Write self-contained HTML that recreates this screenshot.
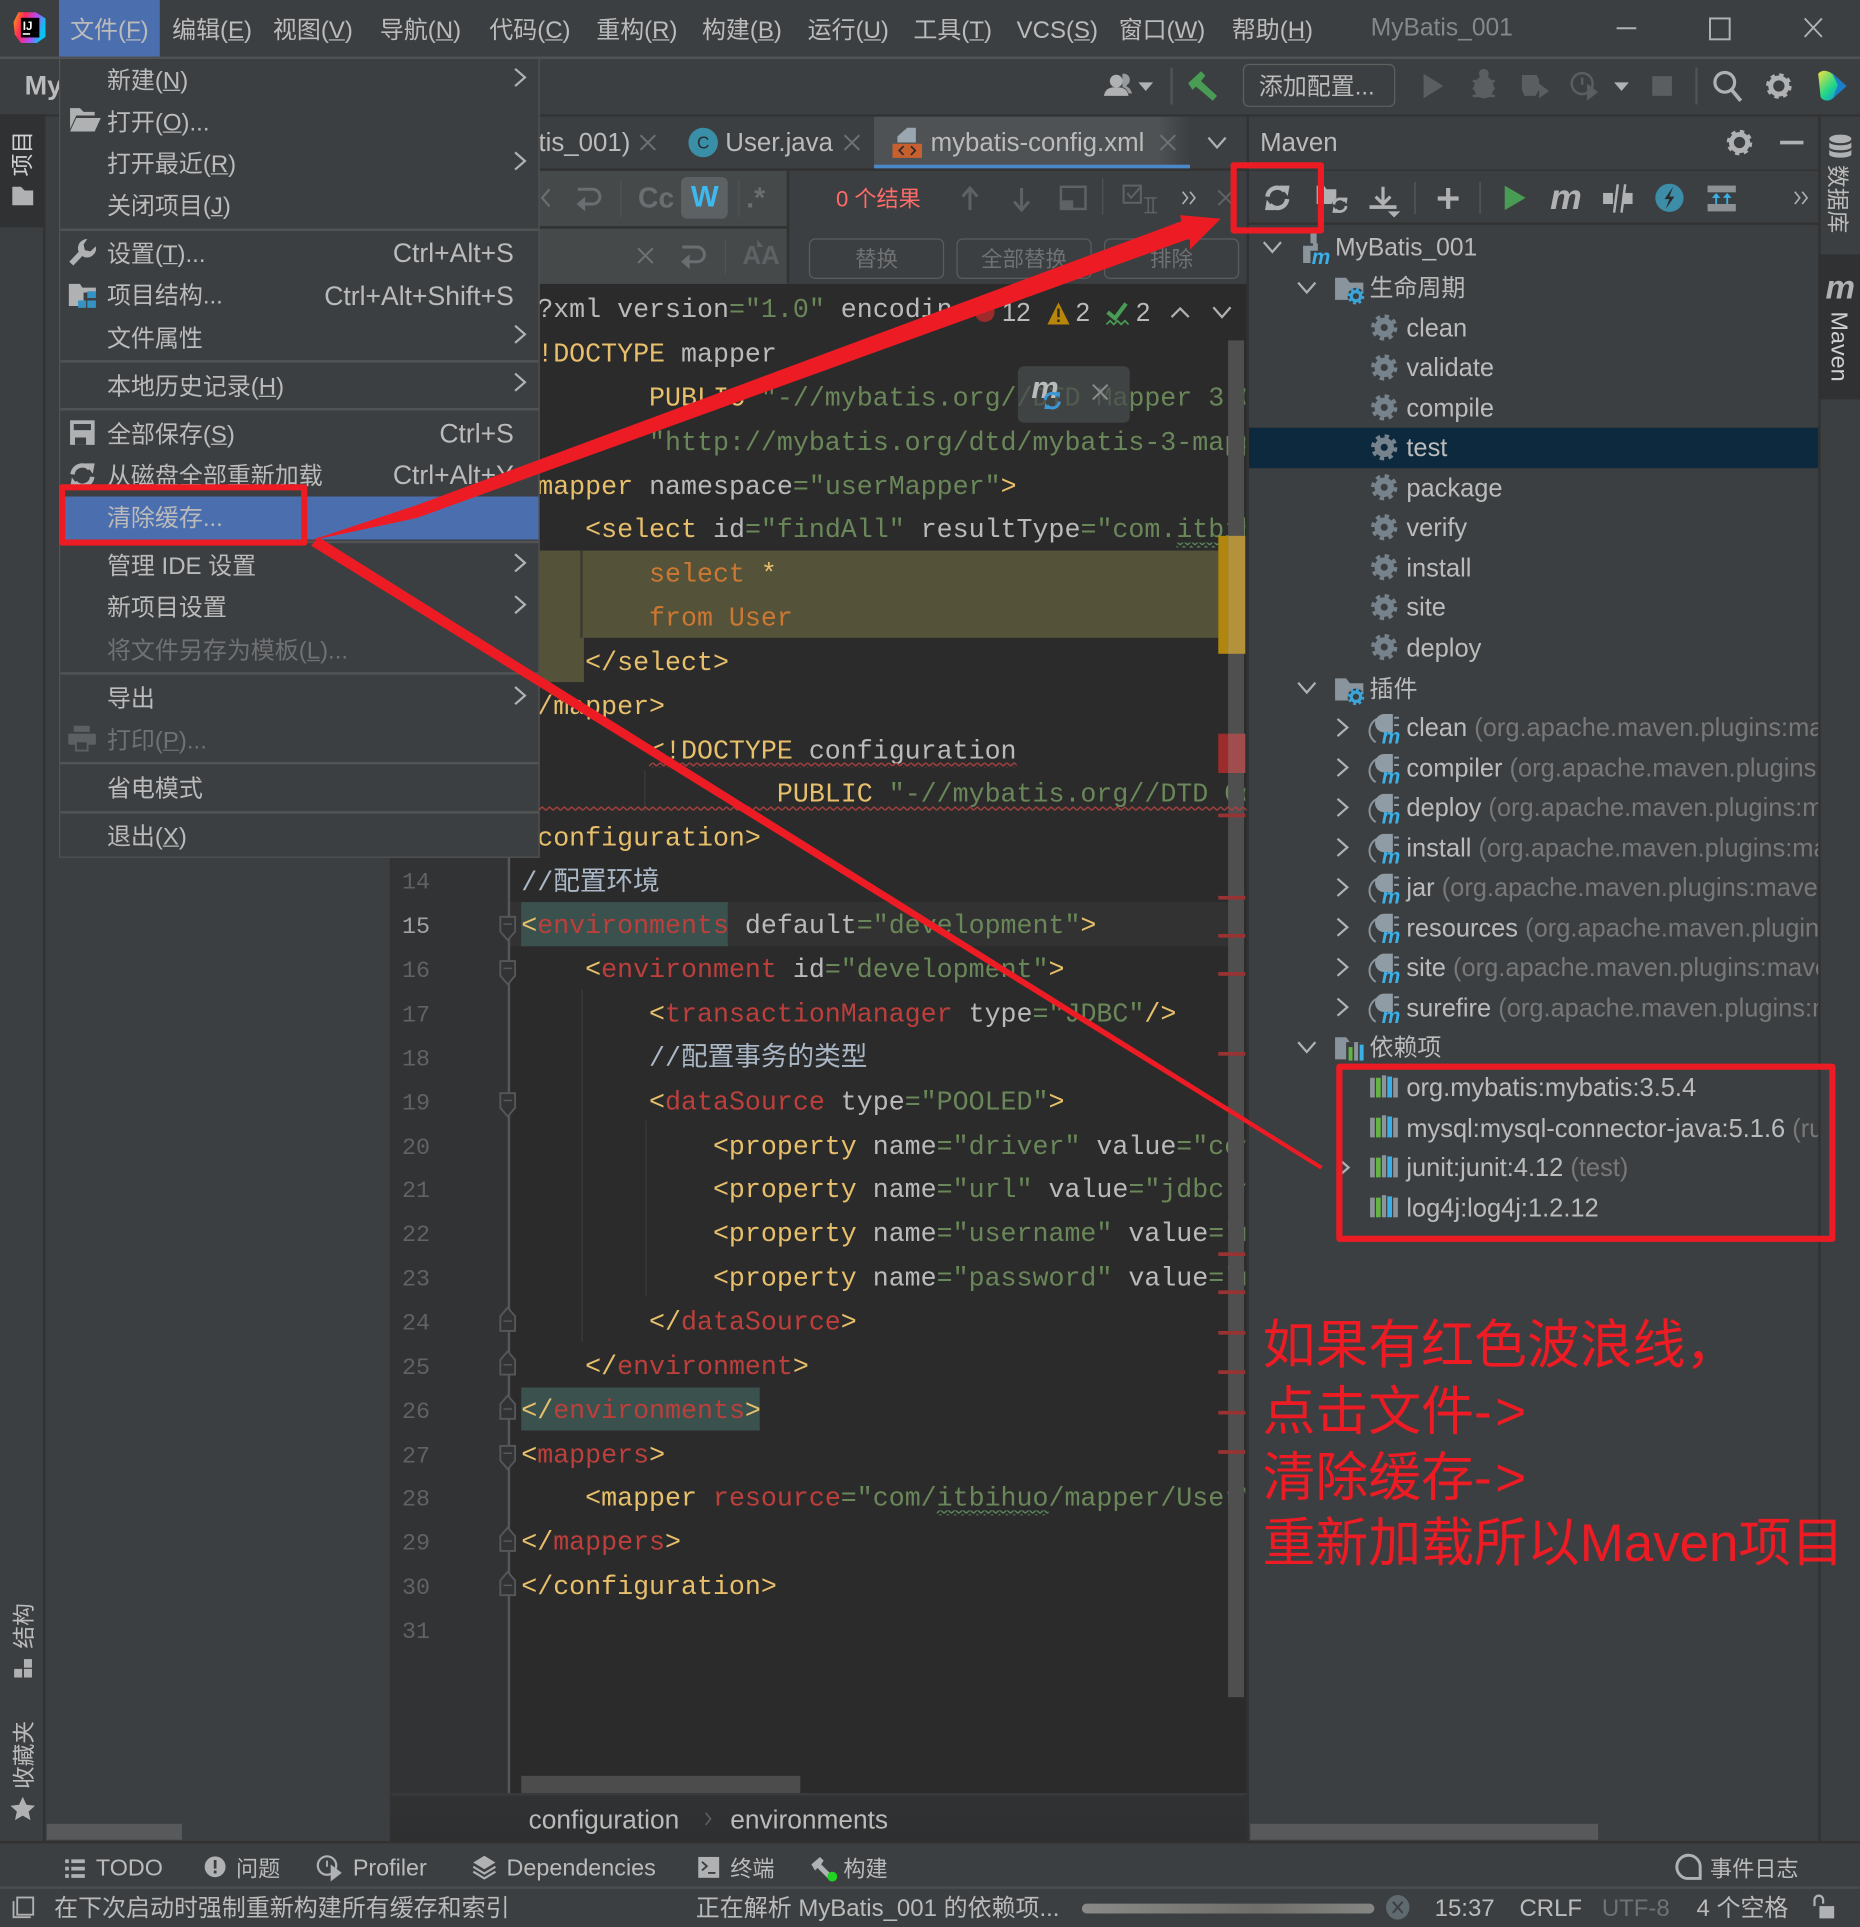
<!DOCTYPE html>
<html lang="zh"><head><meta charset="utf-8"><title>IntelliJ IDEA</title>
<style>
html,body{margin:0;padding:0;width:1860px;height:1927px;overflow:hidden;background:#3c3f41}
#r{position:absolute;left:0;top:0;width:1513px;height:1568px;transform:scale(1.22934,1.22895);transform-origin:0 0;background:#3c3f41;font-family:"Liberation Sans","Noto Sans CJK SC",sans-serif;overflow:hidden}
.b{position:absolute}
.t{position:absolute;white-space:nowrap;line-height:30px;height:30px;margin-top:-14px;font-size:20.7px;color:#bbb}
.z{font-size:19.5px}
.d{color:#6f7173}
.gr{color:#787878}
.s{position:absolute;right:1095px;white-space:nowrap;line-height:30px;height:30px;margin-top:-14px;font-size:21.6px;color:#bbb}
.v{position:absolute;white-space:nowrap;font-size:18.5px;color:#bbb;line-height:20px;transform:translate(-50%,-50%) rotate(-90deg)}
.vr{transform:translate(-50%,-50%) rotate(90deg)}
.c{position:absolute;left:424px;white-space:pre;font:21.67px/36px "Liberation Mono","Noto Sans CJK SC",monospace;height:36px;margin-top:-16px;color:#bababa}
.y{color:#e8bf6a}.e{color:#bc3f3c}.g{color:#6a8759}.o{color:#cc7832}.cm{color:#a9b7c6}
.n{position:absolute;left:327px;font:19px/24px "Liberation Mono",monospace;color:#606366;margin-top:-10px}
.sep{position:absolute;left:49px;width:389px;height:2px;background:#515355}
.red{position:absolute;left:1027px;white-space:nowrap;font-size:43px;line-height:54px;height:54px;margin-top:-26px;color:#ed1c24}
.red i{font-style:normal;letter-spacing:3px}
.fb{position:absolute;border:1.6px solid #5a5d5f;border-radius:5px;box-sizing:border-box;color:#6f7173;font-size:17.5px;text-align:center;line-height:32px;height:33px;top:194px}
.st{position:absolute;left:991px;width:22px;height:3.4px;background:#993333}
</style></head><body>
<div id="r">

<!-- structure -->
<div class="b" style="left:0;top:46px;width:1513px;height:1.5px;background:#505254"></div>
<div class="b" style="left:0;top:93px;width:1513px;height:2px;background:#313335"></div>
<div class="b" style="left:0;top:93px;width:35px;height:92px;background:#2f3133"></div>
<div class="b" style="left:35px;top:93px;width:1.5px;height:1405px;background:#323232"></div>
<div class="b" style="left:317px;top:95px;width:1.5px;height:1403px;background:#323232"></div>
<div class="b" style="left:318px;top:230px;width:96px;height:1231px;background:#313335"></div>
<div class="b" style="left:414px;top:230px;width:600px;height:1231px;background:#2b2b2b"></div>
<div class="b" style="left:318px;top:1459px;width:696px;height:39px;background:linear-gradient(#313233,#2e2f30)"></div>
<div class="b" style="left:318px;top:1459px;width:696px;height:2px;background:#383a3c"></div>
<div class="b" style="left:1014px;top:95px;width:1.5px;height:1403px;background:#323232"></div>
<div class="b" style="left:1479px;top:95px;width:1.5px;height:1403px;background:#323232"></div>
<div class="b" style="left:0;top:1498px;width:1513px;height:2px;background:#323232"></div>
<div class="b" style="left:0;top:1535px;width:1513px;height:2px;background:#4a4c4e"></div>

<!-- current line + highlights -->
<div class="b" style="left:414px;top:734px;width:586px;height:36px;background:#323232"></div>
<div class="b" style="left:424px;top:734px;width:168px;height:36px;background:#3b514d"></div>
<div class="b" style="left:424px;top:1129px;width:194px;height:35px;background:#3b514d"></div>
<div class="b" style="left:438px;top:448px;width:37px;height:107px;background:#545239"></div>
<div class="b" style="left:473px;top:448px;width:518px;height:71px;background:#545239"></div>
<div class="b" style="left:472px;top:448px;width:2px;height:71px;background:#3a3a30"></div>

<!-- indent guides / fold line -->
<div class="b" style="left:413px;top:697px;width:1.5px;height:762px;background:#555759"></div>
<div class="b" style="left:472.5px;top:805px;width:1px;height:287px;background:#3b3b3b"></div>
<div class="b" style="left:524.5px;top:912px;width:1px;height:143px;background:#3b3b3b"></div>
<div class="b" style="left:524px;top:627px;width:1px;height:34px;background:#3b3b3b"></div>

<!-- code -->
<div class="b" style="left:0;top:0;width:1013px;height:1460px;overflow:hidden">
<div class="c" style="top:251px"><span class="y">&lt;</span><span>?xml version</span><span class="g">="1.0"</span> encoding<span class="g">="UTF-8"</span></div>
<div class="c" style="top:287px"><span class="y">&lt;!DOCTYPE</span> mapper</div>
<div class="c" style="top:323px">        <span class="y">PUBLIC</span> <span class="g">"-//mybatis.org//DTD Mapper 3.0//EN"</span></div>
<div class="c" style="top:359px">        <span class="g">"http://mybatis.org/dtd/mybatis-3-mapper.dtd"</span><span class="y">&gt;</span></div>
<div class="c" style="top:394.5px"><span class="y">&lt;mapper</span> namespace<span class="g">="userMapper"</span><span class="y">&gt;</span></div>
<div class="c" style="top:430px">    <span class="y">&lt;select</span> id<span class="g">="findAll"</span> resultType<span class="g">="com.itbihuo.domain.User"</span><span class="y">&gt;</span></div>
<div class="c" style="top:466px">        <span class="o">select</span> <span class="y">*</span></div>
<div class="c" style="top:502px">        <span class="o">from User</span></div>
<div class="c" style="top:538px">    <span class="y">&lt;/select&gt;</span></div>
<div class="c" style="top:574px"><span class="y">&lt;/mapper&gt;</span></div>
<div class="c" style="top:609.5px">        <span class="y">&lt;!DOCTYPE</span> configuration</div>
<div class="c" style="top:645px">                <span class="y">PUBLIC</span> <span class="g">"-//mybatis.org//DTD Config 3.0//EN"</span></div>
<div class="c" style="top:681px"><span class="y">&lt;configuration&gt;</span></div>
<div class="c cm" style="top:716.5px">//配置环境</div>
<div class="c" style="top:752px"><span class="y">&lt;</span><span class="e">environments</span> default<span class="g">="development"</span><span class="y">&gt;</span></div>
<div class="c" style="top:788px">    <span class="y">&lt;</span><span class="e">environment</span> id<span class="g">="development"</span><span class="y">&gt;</span></div>
<div class="c" style="top:824px">        <span class="y">&lt;</span><span class="e">transactionManager</span> type<span class="g">="JDBC"</span><span class="y">/&gt;</span></div>
<div class="c cm" style="top:860px">        //配置事务的类型</div>
<div class="c" style="top:895.5px">        <span class="y">&lt;</span><span class="e">dataSource</span> type<span class="g">="POOLED"</span><span class="y">&gt;</span></div>
<div class="c" style="top:931.5px">            <span class="y">&lt;property</span> name<span class="g">="driver"</span> value<span class="g">="com.mysql.jdbc.Driver"</span></div>
<div class="c" style="top:967px">            <span class="y">&lt;property</span> name<span class="g">="url"</span> value<span class="g">="jdbc:mysql:///test"</span></div>
<div class="c" style="top:1003px">            <span class="y">&lt;property</span> name<span class="g">="username"</span> value<span class="g">="root"</span></div>
<div class="c" style="top:1039px">            <span class="y">&lt;property</span> name<span class="g">="password"</span> value<span class="g">="root"</span></div>
<div class="c" style="top:1075px">        <span class="y">&lt;/</span><span class="e">dataSource</span><span class="y">&gt;</span></div>
<div class="c" style="top:1110.5px">    <span class="y">&lt;/</span><span class="e">environment</span><span class="y">&gt;</span></div>
<div class="c" style="top:1146.5px"><span class="y">&lt;/</span><span class="e">environments</span><span class="y">&gt;</span></div>
<div class="c" style="top:1182.5px"><span class="y">&lt;</span><span class="e">mappers</span><span class="y">&gt;</span></div>
<div class="c" style="top:1218px">    <span class="y">&lt;mapper</span> <span class="e">resource</span><span class="g">="com/itbihuo/mapper/UserMapper.xml"</span></div>
<div class="c" style="top:1254px"><span class="y">&lt;/</span><span class="e">mappers</span><span class="y">&gt;</span></div>
<div class="c" style="top:1290px"><span class="y">&lt;/configuration&gt;</span></div>
</div>

<!-- line numbers -->
<div class="n" style="top:716px">14</div><div class="n" style="top:752px;color:#a4a3a3">15</div><div class="n" style="top:788px">16</div><div class="n" style="top:824px">17</div><div class="n" style="top:860px">18</div><div class="n" style="top:895.5px">19</div><div class="n" style="top:931.5px">20</div><div class="n" style="top:967px">21</div><div class="n" style="top:1003px">22</div><div class="n" style="top:1039px">23</div><div class="n" style="top:1075px">24</div><div class="n" style="top:1110.5px">25</div><div class="n" style="top:1146.5px">26</div><div class="n" style="top:1182.5px">27</div><div class="n" style="top:1218px">28</div><div class="n" style="top:1254px">29</div><div class="n" style="top:1290px">30</div><div class="n" style="top:1326px">31</div>

<!-- editor error stripe + scrollbars -->
<div class="b" style="left:991px;top:436px;width:9px;height:96px;background:#b0860f"></div>
<div class="b" style="left:999px;top:277px;width:13px;height:1104px;background:#4f4f4f"></div>
<div class="b" style="left:999px;top:436px;width:14px;height:96px;background:#b3923b"></div>
<div class="b" style="left:991px;top:597px;width:8px;height:32px;background:#9b2c2c"></div>
<div class="b" style="left:999px;top:597px;width:14px;height:32px;background:#a14d4d"></div>
<div class="st" style="top:662px"></div><div class="st" style="top:729px"></div><div class="st" style="top:760px"></div><div class="st" style="top:791px"></div><div class="st" style="top:856px"></div><div class="st" style="top:1019px"></div><div class="st" style="top:1050px"></div><div class="st" style="top:1083px"></div><div class="st" style="top:1115px"></div><div class="st" style="top:1148px"></div><div class="st" style="top:1180px"></div>
<div class="b" style="left:424px;top:1445px;width:227px;height:14px;background:#4c4c4c"></div>
<div class="b" style="left:37.5px;top:1484px;width:110px;height:13px;background:#57595b"></div>
<div class="b" style="left:1017px;top:1484px;width:283px;height:13px;background:#57595b"></div>

<!-- inspection widget -->
<div class="b" style="left:776px;top:238px;width:224px;height:32px;background:#2b2b2b"></div>
<div class="t" style="left:815px;top:254px;font-size:21px">12</div>
<div class="t" style="left:875px;top:254px;font-size:21px">2</div>
<div class="t" style="left:924px;top:254px;font-size:21px">2</div>
<div class="b" style="left:828px;top:298px;width:91px;height:46px;background:rgba(72,76,78,.72);border-radius:5px"></div>

<!-- tab bar -->
<div class="b" style="left:711px;top:95px;width:257px;height:39px;background:linear-gradient(90deg,#4e5254 90%,#3c3f41)"></div>
<div class="b" style="left:711px;top:133.5px;width:257px;height:4.5px;background:#4a88c7"></div>
<div class="t" style="left:438px;top:116px;font-size:21px">tis_001)</div>
<div class="t" style="left:590px;top:116px;font-size:21px">User.java</div>
<div class="t" style="left:757px;top:116px;font-size:21px">mybatis-config.xml</div>

<!-- find bar -->
<div class="b" style="left:318px;top:138px;width:696px;height:92.5px;background:#3c3f41"></div>
<div class="b" style="left:318px;top:138px;width:322px;height:46px;background:#45494a"></div>
<div class="b" style="left:318px;top:186px;width:322px;height:44.5px;background:#45494a"></div>
<div class="b" style="left:640px;top:138px;width:1.5px;height:92px;background:#323232"></div>
<div class="b" style="left:318px;top:137px;width:696px;height:1.5px;background:#323232"></div>
<div class="b" style="left:318px;top:184px;width:322px;height:2px;background:#323232"></div>
<div class="b" style="left:554px;top:144px;width:38px;height:34px;border-radius:5px;background:#5c6164"></div>
<div class="t" style="left:519px;top:160px;font-size:23px;font-weight:bold;color:#6b6e70">Cc</div>
<div class="t" style="left:562px;top:160px;font-size:24px;font-weight:bold;color:#3db8f0">W</div>
<div class="t" style="left:607px;top:160px;font-size:23px;font-weight:bold;color:#6b6e70">.*</div>
<div class="t z" style="left:680px;top:161px;font-size:18px;color:#ff6b68">0 个结果</div>
<div class="t" style="left:604px;top:208px;font-size:21px;font-weight:bold;color:#5f6265">AA</div>
<div class="fb" style="left:658px;width:110px">替换</div>
<div class="fb" style="left:778px;width:110px">全部替换</div>
<div class="fb" style="left:898px;width:110px">排除</div>

<!-- main toolbar -->
<div class="t" style="left:20px;top:69px;font-size:22px;font-weight:bold">My</div>
<div class="b" style="left:1011px;top:52px;width:124px;height:35px;border:1.6px solid #5e6060;border-radius:5px;box-sizing:border-box"></div>
<div class="t z" style="left:1024px;top:70px">添加配置...</div>
<div class="b" style="left:952px;top:55px;width:1.5px;height:30px;background:#505254"></div>
<div class="b" style="left:1379px;top:55px;width:1.5px;height:30px;background:#505254"></div>

<!-- menu bar -->
<div class="b" style="left:48px;top:0;width:82px;height:46px;background:#4b6eaf"></div>
<div class="t z" style="left:57px;top:24px"><span>文件(<u>F</u>)</span></div>
<div class="t z" style="left:140px;top:24px">编辑(<u>E</u>)</div>
<div class="t z" style="left:222px;top:24px">视图(<u>V</u>)</div>
<div class="t z" style="left:309px;top:24px">导航(<u>N</u>)</div>
<div class="t z" style="left:398px;top:24px">代码(<u>C</u>)</div>
<div class="t z" style="left:485px;top:24px">重构(<u>R</u>)</div>
<div class="t z" style="left:571px;top:24px">构建(<u>B</u>)</div>
<div class="t z" style="left:657px;top:24px">运行(<u>U</u>)</div>
<div class="t z" style="left:743px;top:24px">工具(<u>T</u>)</div>
<div class="t z" style="left:827px;top:24px">VCS(<u>S</u>)</div>
<div class="t z" style="left:910px;top:24px">窗口(<u>W</u>)</div>
<div class="t z" style="left:1002px;top:24px">帮助(<u>H</u>)</div>
<div class="t" style="left:1115px;top:22px;font-size:20px;color:#85888a">MyBatis_001</div>

<!-- Maven panel -->
<div class="b" style="left:1016px;top:137.5px;width:463px;height:1.5px;background:#323232"></div>
<div class="b" style="left:1016px;top:181px;width:463px;height:1.5px;background:#323232"></div>
<div class="b" style="left:1016px;top:348px;width:463px;height:33px;background:#0d293e"></div>
<div class="t" style="left:1025px;top:116px;font-size:21px">Maven</div>
<div class="b" style="left:0;top:0;width:1479px;height:1498px;overflow:hidden">
<div class="t" style="left:1086px;top:201px;font-size:20px">MyBatis_001</div>
<div class="t z" style="left:1114px;top:234px">生命周期</div>
<div class="t" style="left:1144px;top:266.5px">clean</div>
<div class="t" style="left:1144px;top:299px">validate</div>
<div class="t" style="left:1144px;top:331.5px">compile</div>
<div class="t" style="left:1144px;top:364px">test</div>
<div class="t" style="left:1144px;top:396.5px">package</div>
<div class="t" style="left:1144px;top:429px">verify</div>
<div class="t" style="left:1144px;top:461.5px">install</div>
<div class="t" style="left:1144px;top:494px">site</div>
<div class="t" style="left:1144px;top:526.5px">deploy</div>
<div class="t z" style="left:1114px;top:559.5px">插件</div>
<div class="t" style="left:1144px;top:592px">clean <span class="gr">(org.apache.maven.plugins:maven-clean-plugin)</span></div>
<div class="t" style="left:1144px;top:624.5px">compiler <span class="gr">(org.apache.maven.plugins:maven-compiler)</span></div>
<div class="t" style="left:1144px;top:657px">deploy <span class="gr">(org.apache.maven.plugins:maven-deploy)</span></div>
<div class="t" style="left:1144px;top:689.5px">install <span class="gr">(org.apache.maven.plugins:maven-install)</span></div>
<div class="t" style="left:1144px;top:722px">jar <span class="gr">(org.apache.maven.plugins:maven-jar-plugin)</span></div>
<div class="t" style="left:1144px;top:754.5px">resources <span class="gr">(org.apache.maven.plugins:maven)</span></div>
<div class="t" style="left:1144px;top:787px">site <span class="gr">(org.apache.maven.plugins:maven-site)</span></div>
<div class="t" style="left:1144px;top:819.5px">surefire <span class="gr">(org.apache.maven.plugins:maven)</span></div>
<div class="t z" style="left:1114px;top:852px">依赖项</div>
<div class="t" style="left:1144px;top:885px">org.mybatis:mybatis:3.5.4</div>
<div class="t" style="left:1144px;top:917.5px">mysql:mysql-connector-java:5.1.6 <span class="gr">(runtime)</span></div>
<div class="t" style="left:1144px;top:950px">junit:junit:4.12 <span class="gr">(test)</span></div>
<div class="t" style="left:1144px;top:982.5px">log4j:log4j:1.2.12</div>
</div>

<!-- right stripe -->
<div class="b" style="left:1480px;top:207px;width:33px;height:118px;background:#2f3133"></div>
<div class="v vr" style="left:1494px;top:162px">数据库</div>
<div class="v vr" style="left:1495px;top:282px;font-size:19px;color:#d0d0d0">Maven</div>

<!-- left stripe -->
<div class="v" style="left:19px;top:125px;color:#d0d0d0">项目</div>
<div class="v" style="left:19.5px;top:1323px">结构</div>
<div class="v" style="left:19.5px;top:1428px">收藏夹</div>

<!-- breadcrumbs -->
<div class="t" style="left:430px;top:1480px;font-size:21.4px">configuration</div>
<div class="t" style="left:594px;top:1480px;font-size:21.4px">environments</div>

<!-- bottom tool bar -->
<div class="t" style="left:78px;top:1520px;font-size:19px">TODO</div>
<div class="t" style="left:192px;top:1520px;font-size:18px">问题</div>
<div class="t" style="left:287px;top:1520px;font-size:19px">Profiler</div>
<div class="t" style="left:412px;top:1520px;font-size:19px">Dependencies</div>
<div class="t" style="left:594px;top:1520px;font-size:18px">终端</div>
<div class="t" style="left:686px;top:1520px;font-size:18px">构建</div>
<div class="t" style="left:1391px;top:1520px;font-size:18px">事件日志</div>

<!-- status bar -->
<div class="t" style="left:44px;top:1552px;font-size:19.5px">在下次启动时强制重新构建所有缓存和索引</div>
<div class="t" style="left:566px;top:1552px;font-size:19.5px">正在解析 MyBatis_001 的依赖项...</div>
<div class="b" style="left:880px;top:1549px;width:238px;height:7.5px;border-radius:4px;background:linear-gradient(90deg,#8a8a88,#6f6e6a 60%,#858583)"></div>
<div class="t" style="left:1167px;top:1552px;font-size:19.5px">15:37</div>
<div class="t" style="left:1236px;top:1552px;font-size:19.5px">CRLF</div>
<div class="t" style="left:1303px;top:1552px;font-size:19.5px;color:#6f7173">UTF-8</div>
<div class="t" style="left:1380px;top:1552px;font-size:19.5px">4 个空格</div>

<!-- file menu -->
<div class="b" style="left:48px;top:46.5px;width:390.5px;height:651px;background:#3c3f41;border:1.5px solid #515355;box-sizing:border-box"></div>
<div class="b" style="left:49.5px;top:404px;width:388px;height:34.5px;background:#4b6eaf"></div>
<div class="sep" style="top:186px"></div>
<div class="sep" style="top:293px"></div>
<div class="sep" style="top:332px"></div>
<div class="sep" style="top:440px"></div>
<div class="sep" style="top:547px"></div>
<div class="sep" style="top:620px"></div>
<div class="sep" style="top:659.5px"></div>
<div class="t z" style="left:87px;top:65px">新建(<u>N</u>)</div>
<div class="t z" style="left:87px;top:99px">打开(<u>O</u>)...</div>
<div class="t z" style="left:87px;top:133px">打开最近(<u>R</u>)</div>
<div class="t z" style="left:87px;top:167px">关闭项目(<u>J</u>)</div>
<div class="t z" style="left:87px;top:206px">设置(<u>T</u>)...</div>
<div class="t z" style="left:87px;top:240px">项目结构...</div>
<div class="t z" style="left:87px;top:275px">文件属性</div>
<div class="t z" style="left:87px;top:314px">本地历史记录(<u>H</u>)</div>
<div class="t z" style="left:87px;top:353px">全部保存(<u>S</u>)</div>
<div class="t z" style="left:87px;top:387px">从磁盘全部重新加载</div>
<div class="t z" style="left:87px;top:421px">清除缓存...</div>
<div class="t z" style="left:87px;top:460px">管理 IDE 设置</div>
<div class="t z" style="left:87px;top:494px">新项目设置</div>
<div class="t z d" style="left:87px;top:529px">将文件另存为模板(<u>L</u>)...</div>
<div class="t z" style="left:87px;top:568px">导出</div>
<div class="t z d" style="left:87px;top:602px">打印(<u>P</u>)...</div>
<div class="t z" style="left:87px;top:641px">省电模式</div>
<div class="t z" style="left:87px;top:680px">退出(<u>X</u>)</div>
<div class="s" style="top:205px">Ctrl+Alt+S</div>
<div class="s" style="top:240px">Ctrl+Alt+Shift+S</div>
<div class="s" style="top:352px">Ctrl+S</div>
<div class="s" style="top:386px">Ctrl+Alt+Y</div>

<!-- icons -->
<svg class="b" style="left:0;top:0" width="1513" height="1568" viewBox="0 0 1513 1568" xmlns="http://www.w3.org/2000/svg">
<defs>
<linearGradient id="ij" x1="0" y1="0" x2="1" y2=".3"><stop offset="0" stop-color="#f9a012"/><stop offset=".35" stop-color="#fe2857"/><stop offset=".7" stop-color="#b74af7"/><stop offset="1" stop-color="#07c3f2"/></linearGradient>
<linearGradient id="cw" x1="0" y1="0" x2="1" y2="1"><stop offset="0" stop-color="#f5e23c"/><stop offset=".5" stop-color="#21d789"/><stop offset="1" stop-color="#087cfa"/></linearGradient>
<pattern id="wr" width="6" height="4" patternUnits="userSpaceOnUse"><path d="M0 3.4L3 .6L6 3.4" fill="none" stroke="#a8413f" stroke-width="1.1"/></pattern>
<pattern id="wg" width="6" height="4" patternUnits="userSpaceOnUse"><path d="M0 3.4L3 .6L6 3.4" fill="none" stroke="#5d8a60" stroke-width="1.1"/></pattern>
<g id="gear"><circle r="5.4" fill="none" stroke="#76838d" stroke-width="5"/><circle r="9.2" fill="none" stroke="#76838d" stroke-width="3" stroke-dasharray="3.6 3.63"/></g>
<g id="gearw"><circle r="6.6" fill="none" stroke="#afb1b3" stroke-width="4"/><circle r="9" fill="none" stroke="#afb1b3" stroke-width="2.8" stroke-dasharray="3.5 3.57"/></g>
<g id="gearb"><circle r="6.8" fill="#3c3f41"/><circle r="3.8" fill="none" stroke="#3ba5d8" stroke-width="2.6"/><circle r="5.8" fill="none" stroke="#3ba5d8" stroke-width="2" stroke-dasharray="2.27 2.28"/></g>
<g id="plug"><path d="M-7 -7A11 11 0 0 0 -8 12" fill="none" stroke="#8a949c" stroke-width="1.6"/><path d="M-1 -11h7v15h-7a7.500 7.500 0 0 1 0 -15z" fill="#8f9ba5"/><path d="M7 -8h4M7 -2h4" stroke="#8f9ba5" stroke-width="1.6"/><text x="-3" y="13" font-family="Liberation Sans" font-size="17" font-weight="bold" font-style="italic" fill="#3bb0e6">m</text></g>
<g id="bars"><rect x="0" y="2" width="3.8" height="16" fill="#8a949c"/><rect x="4.8" y="2" width="3.8" height="16" fill="#62b543"/><rect x="9.6" y="0" width="3.4" height="18" fill="#8a949c"/><rect x="14" y="1" width="3.8" height="17" fill="#3bb0e6"/><rect x="18.8" y="2" width="3.8" height="16" fill="#8a949c"/></g>
<path id="chr" d="M-4 -7L4 0L-4 7" fill="none" stroke="#afb1b3" stroke-width="1.8"/>
<path id="chd" d="M-7 -4L0 4L7 -4" fill="none" stroke="#afb1b3" stroke-width="1.8"/>
<path id="x" d="M-6 -6L6 6M6 -6L-6 6" fill="none" stroke-width="1.6"/>
<g id="rf" fill="none" stroke="#afb1b3" stroke-width="3.6"><path d="M-8 -1A8 8 0 0 1 6 -5.5"/><path d="M8 1A8 8 0 0 1 -6 5.5"/><path d="M2 -10L10 -10L8.500 -1.500z" fill="#afb1b3" stroke="none"/><path d="M-2 10L-10 10L-8.500 1.500z" fill="#afb1b3" stroke="none"/></g>
</defs>

<!-- IJ logo -->
<path d="M15 10L29 10L37 15L37 30L30 35L17 35L12 28L11 18z" fill="url(#ij)"/>
<rect x="17" y="14.5" width="15" height="16" fill="#000"/>
<text x="18.5" y="24.5" font-family="Liberation Sans" font-size="9.5" font-weight="bold" fill="#fff">IJ</text>
<rect x="18.5" y="27" width="6" height="1.3" fill="#fff"/>

<!-- window controls -->
<path d="M1315 23h16" stroke="#afb1b3" stroke-width="1.6"/>
<rect x="1391" y="15" width="16" height="17" fill="none" stroke="#afb1b3" stroke-width="1.6"/>
<path d="M1468 15L1482 30M1482 15L1468 30" stroke="#afb1b3" stroke-width="1.5"/>

<!-- main toolbar icons -->
<g fill="#afb1b3"><circle cx="908" cy="66" r="5.2"/><path d="M898 78c1-6 5-7 10-7s9 1 10 7z"/><path d="M913 60a5 5 0 0 1 5 8l-2 2 3 2 2 4h-3c-1-3-3-5-5-5z" opacity=".8"/><path d="M926 67h12l-6 7z"/></g>
<path d="M966.5 67.6L977 58L980.5 61.5L977 66L990 78L986.5 82L973 70.5L970 73z" fill="#499c54"/>
<path d="M1158 60L1174 70L1158 80z" fill="#5b5e60"/>
<g fill="#5b5e60"><ellipse cx="1207" cy="71" rx="8" ry="9"/><path d="M1198 66h18M1198 72h18M1198 78h18" stroke="#5b5e60" stroke-width="2"/><circle cx="1207" cy="60" r="4"/></g>
<path d="M1238 61h12l2 4v8l-3 5h-9l-2-5zM1252 68l8 6-8 6z" fill="#5b5e60"/>
<g fill="none" stroke="#5b5e60" stroke-width="2"><circle cx="1287" cy="68" r="8.5"/><path d="M1287 63v6"/></g><path d="M1291 68l9 7-9 7z" fill="#5b5e60"/>
<path d="M1313 67h12l-6 7z" fill="#afb1b3"/>
<rect x="1344" y="62" width="16" height="16" fill="#5b5e60"/>
<circle cx="1403" cy="67" r="8" fill="none" stroke="#afb1b3" stroke-width="2.6"/><path d="M1408.5 73L1416 82" stroke="#afb1b3" stroke-width="3"/>
<use href="#gearw" x="1447" y="70"/>
<path d="M1479 60c4-4 7-2 10-1l13 11-11 10c-4 3-8 2-10-1z" fill="url(#cw)"/><path d="M1490 59l12 11-11 10 4-11z" fill="#1a7fc7"/>

<!-- tabs -->
<use href="#x" x="527" y="116" stroke="#6f7173"/>
<circle cx="572" cy="116" r="12" fill="#3a8fa8"/><text x="572" y="121" text-anchor="middle" font-family="Liberation Sans" font-size="14" fill="#2b2b2b">C</text>
<use href="#x" x="693" y="116" stroke="#6f7173"/>
<path d="M738 104h7v12h-15v-5z" fill="#9aa7b0"/>
<rect x="726" y="117" width="24" height="11.500" fill="#c75f2e"/>
<path d="M735 119l-3.500 3.500 3.500 3.500M741 119l3.500 3.500-3.500 3.500" fill="none" stroke="#2b2b2b" stroke-width="1.4"/>
<use href="#x" x="950" y="116" stroke="#6f7173"/>
<use href="#chd" x="990" y="116"/>

<!-- find bar icons -->
<path d="M447 154l-6 7 6 7" fill="none" stroke="#6b6e70" stroke-width="1.8"/>
<path d="M470 154h12a6 6 0 0 1 0 12h-9" fill="none" stroke="#6b6e70" stroke-width="2.4"/><path d="M476 160l-7 6 7 6z" fill="#6b6e70"/>
<path d="M505 147v30M601 147v30" stroke="#515355" stroke-width="1"/>
<path d="M789 153v18M783 160l6-7 6 7" fill="none" stroke="#5f6265" stroke-width="2.4"/>
<path d="M831 153v18M825 164l6 7 6-7" fill="none" stroke="#5f6265" stroke-width="2.4"/>
<rect x="863" y="152" width="20" height="18" fill="none" stroke="#5f6265" stroke-width="2"/><rect x="863" y="163" width="10" height="7" fill="#5f6265"/>
<path d="M897 145v30" stroke="#515355"/>
<rect x="914" y="151" width="14" height="14" fill="none" stroke="#5f6265" stroke-width="1.6"/><path d="M917 157l3 4 8-9" fill="none" stroke="#5f6265" stroke-width="1.6"/><path d="M931 161h10M931 173h10M934 161v12M938 161v12" stroke="#5f6265" stroke-width="1.2"/>
<path d="M962 156l4 5-4 5M968 156l4 5-4 5" fill="none" stroke="#afb1b3" stroke-width="1.3"/>
<use href="#x" x="997" y="161" stroke="#5f6265"/>
<use href="#x" x="525" y="208" stroke="#6f7173"/>
<path d="M555 201h12a6 6 0 0 1 0 12h-9" fill="none" stroke="#6b6e70" stroke-width="2.4"/><path d="M561 207l-7 6 7 6z" fill="#6b6e70"/>
<path d="M590 195v28" stroke="#515355"/>
<path d="M616 195l5 6h-5z" fill="#5f6265"/>

<!-- inspection icons -->
<circle cx="801" cy="254" r="8" fill="#9d2b2b"/>
<path d="M861 246L870 264H852z" fill="#b8860b"/><path d="M861 251v7M861 260v2" stroke="#2b2b2b" stroke-width="2"/>
<path d="M901 254l6 5 9-12" fill="none" stroke="#499c54" stroke-width="3.4"/><path d="M900 264l3-3 3 3 3-3 3 3 3-3 3 3" fill="none" stroke="#499c54" stroke-width="1.4"/>
<path d="M953 258l7-7 7 7" fill="none" stroke="#afb1b3" stroke-width="1.8"/>
<use href="#chd" x="994" y="254"/>
<text x="839" y="324" font-family="Liberation Sans" font-size="25" font-weight="bold" font-style="italic" fill="#b9bbbd">m</text>
<g transform="translate(856,326) scale(.72)" fill="none" stroke="#3b97d3"><path d="M-8 -1A8 8 0 0 1 6 -5.5" stroke-width="3.4"/><path d="M8 1A8 8 0 0 1 -6 5.5" stroke-width="3.4"/><path d="M2.5 -9.5L9 -9.5L8 -2.5z" fill="#3b97d3" stroke="none"/><path d="M-2.5 9.5L-9 9.5L-8 2.5z" fill="#3b97d3" stroke="none"/></g>
<use href="#x" x="895" y="319" stroke="#8a8c8e"/>

<!-- wavy underlines -->
<rect x="528" y="620.5" width="299" height="4" fill="url(#wr)"/>
<rect x="438" y="656" width="576" height="4" fill="url(#wr)"/>
<rect x="957" y="441.5" width="34" height="4" fill="url(#wg)"/>
<rect x="762" y="1229" width="91" height="4" fill="url(#wg)"/>

<!-- fold markers -->
<g fill="#313335" stroke="#555759" stroke-width="1.5">
<path d="M407 746h12v12l-6 7l-6-7z"/><path d="M407 782h12v12l-6 7l-6-7z"/><path d="M407 889.5h12v12l-6 7l-6-7z"/>
<path d="M407 1176.5h12v12l-6 7l-6-7z"/>
<path d="M407 1083v-12l6-7l6 7v12z"/><path d="M407 1118.5v-12l6-7l6 7v12z"/><path d="M407 1154.5v-12l6-7l6 7v12z"/><path d="M407 1262v-12l6-7l6 7v12z"/><path d="M407 1298v-12l6-7l6 7v12z"/>
</g>
<path d="M409.5 752h7M409.5 788h7M409.5 895.5h7M409.5 1182.5h7M409.5 1075h7M409.5 1110.5h7M409.5 1146.5h7M409.5 1254h7M409.5 1290h7" stroke="#555759" stroke-width="1.2"/>

<!-- maven toolbar -->
<use href="#gearw" x="1415" y="116"/>
<path d="M1448 116h19" stroke="#afb1b3" stroke-width="3"/>
<use href="#rf" x="1039" y="161"/>
<path d="M1071 151h6l2 3h8v7l-4 5h-12z" fill="#afb1b3"/>
<g transform="translate(1090,167) scale(.62)"><use href="#rf"/></g>
<path d="M1125 152v13M1119 160l6 6 6-6" fill="none" stroke="#afb1b3" stroke-width="2.6"/><rect x="1114" y="167" width="22" height="3" fill="#afb1b3"/><path d="M1129 172h10l-5 5z" fill="#afb1b3"/>
<path d="M1151 148v26M1204 148v26" stroke="#515355" stroke-width="1.4"/>
<path d="M1178 153v17M1169.500 161.500h17" stroke="#afb1b3" stroke-width="3.4"/>
<path d="M1224 151L1241 161L1224 171z" fill="#499c54"/>
<text x="1261" y="170" font-family="Liberation Sans" font-size="29" font-weight="bold" font-style="italic" fill="#afb1b3">m</text>
<rect x="1304" y="157" width="8" height="9" fill="#afb1b3"/><rect x="1320" y="157" width="8" height="9" fill="#afb1b3"/><path d="M1316 150l-3 23M1322 150l-3 23" stroke="#afb1b3" stroke-width="2"/>
<circle cx="1358" cy="161" r="11.500" fill="#3d8ca8"/><path d="M1361 152l-7 10h4l-3 8 7-10h-4z" fill="#2b2b2b"/>
<rect x="1389" y="151" width="23" height="5.500" fill="#8e9193"/><rect x="1389" y="166" width="23" height="6" fill="#8e9193"/>
<path d="M1396 158v8M1405 158v8" stroke="#3bb0e6" stroke-width="1.500"/><path d="M1392.500 161l3.500-4 3.500 4zM1401.500 161l3.500-4 3.500 4z" fill="#3bb0e6"/>
<path d="M1460 156l4 5-4 5M1466 156l4 5-4 5" fill="none" stroke="#afb1b3" stroke-width="1.300"/>

<!-- tree -->
<use href="#chd" x="1035" y="201"/><use href="#chd" x="1063" y="234"/><use href="#chd" x="1063" y="559.500"/><use href="#chd" x="1063" y="852"/>
<path d="M1066 190l4-1h1v9h-5zM1060 200h8v-2h4v6h-6v10h-6z" fill="#8a949c"/>
<text x="1067" y="215" font-family="Liberation Sans" font-size="17" font-weight="bold" font-style="italic" fill="#3bb0e6">m</text>
<g fill="#8a949c"><path d="M1086 226h9l3 4h11v14h-23z"/><path d="M1086 552h9l3 4h11v14h-23z"/><path d="M1086 844h9l3 4h11v14h-23z"/></g>
<use href="#gearb" x="1103" y="241"/><use href="#gearb" x="1103" y="567"/>
<rect x="1095" y="848" width="16" height="16" fill="#3c3f41"/>
<g><rect x="1097" y="852" width="3.200" height="11" fill="#62b543"/><rect x="1101.500" y="848" width="3.200" height="15" fill="#8a949c"/><rect x="1106" y="850" width="3.200" height="13" fill="#3bb0e6"/></g>
<use href="#gear" x="1126" y="266.500"/><use href="#gear" x="1126" y="299"/><use href="#gear" x="1126" y="331.500"/><use href="#gear" x="1126" y="364"/><use href="#gear" x="1126" y="396.500"/><use href="#gear" x="1126" y="429"/><use href="#gear" x="1126" y="461.500"/><use href="#gear" x="1126" y="494"/><use href="#gear" x="1126" y="526.500"/>
<use href="#chr" x="1092" y="592"/><use href="#chr" x="1092" y="624.500"/><use href="#chr" x="1092" y="657"/><use href="#chr" x="1092" y="689.500"/><use href="#chr" x="1092" y="722"/><use href="#chr" x="1092" y="754.500"/><use href="#chr" x="1092" y="787"/><use href="#chr" x="1092" y="819.500"/><use href="#chr" x="1093" y="950"/>
<use href="#plug" x="1127" y="592"/><use href="#plug" x="1127" y="624.500"/><use href="#plug" x="1127" y="657"/><use href="#plug" x="1127" y="689.500"/><use href="#plug" x="1127" y="722"/><use href="#plug" x="1127" y="754.500"/><use href="#plug" x="1127" y="787"/><use href="#plug" x="1127" y="819.500"/>
<use href="#bars" x="1114.500" y="875"/><use href="#bars" x="1114.500" y="907.500"/><use href="#bars" x="1114.500" y="940"/><use href="#bars" x="1114.500" y="972.500"/>

<!-- right stripe icons -->
<g fill="#afb1b3"><ellipse cx="1497" cy="113" rx="9" ry="3.500"/><path d="M1488 116c2 3 16 3 18 0v4c-2 3-16 3-18 0zM1488 122c2 3 16 3 18 0v4c-2 3-16 3-18 0z"/></g>
<text x="1485" y="243" font-family="Liberation Sans" font-size="27" font-weight="bold" font-style="italic" fill="#afb1b3">m</text>

<!-- left stripe icons -->
<path d="M10 152h7l3 3h7v12H10z" fill="#afb1b3"/>
<g fill="#afb1b3"><rect x="11.500" y="1358" width="6.500" height="7"/><rect x="19.500" y="1358" width="6.500" height="7"/><rect x="19.500" y="1350" width="6.500" height="7"/></g>
<path d="M18.500 1462l3 6.500 7 .8-5.200 4.700 1.500 7-6.300-3.600-6.300 3.600 1.500-7-5.200-4.700 7-.8z" fill="#afb1b3"/>

<!-- breadcrumb chevron -->
<path d="M574 1475l4 5-4 5" fill="none" stroke="#5d6062" stroke-width="1.300"/>

<!-- bottom tool icons -->
<g fill="#afb1b3"><path d="M53 1513h3v3h-3zM58 1513h11v3H58zM53 1519h3v3h-3zM58 1519h11v3H58zM53 1525h3v3h-3zM58 1525h11v3H58z"/></g>
<circle cx="175" cy="1519" r="8.500" fill="#afb1b3"/><path d="M175 1513.500v7M175 1522v2.500" stroke="#3c3f41" stroke-width="2.200"/>
<circle cx="266" cy="1518" r="7.500" fill="none" stroke="#afb1b3" stroke-width="1.800"/><path d="M266 1514v5" stroke="#afb1b3" stroke-width="1.500"/><path d="M269 1517l9 7-9 7z" fill="#afb1b3"/>
<path d="M394 1510l9 5.500-9 5.500-9-5.500z" fill="#afb1b3"/><path d="M385 1519l9 5.500 9-5.500M385 1523l9 5.500 9-5.500" fill="none" stroke="#afb1b3" stroke-width="1.700"/>
<rect x="568" y="1511" width="17" height="17" fill="#afb1b3"/><path d="M571 1515l4 3.500-4 3.500M576 1524h6" fill="none" stroke="#3c3f41" stroke-width="1.500"/>
<path d="M660 1517l7-6 3 3-2 3 9 9-3 3-9-9-2 2z" fill="#afb1b3"/><circle cx="677" cy="1527" r="4" fill="#22d422"/>
<path d="M1383 1528.500h-11a9.500 9.500 0 1 1 11-9z" fill="none" stroke="#afb1b3" stroke-width="2.400"/>

<!-- status bar icons -->
<rect x="14" y="1544" width="13" height="14" fill="none" stroke="#afb1b3" stroke-width="1.500"/><path d="M11 1547v13h14" fill="none" stroke="#afb1b3" stroke-width="1.500"/>
<ellipse cx="1137" cy="1552" rx="9.500" ry="10" fill="#5f6a70"/><path d="M1133 1547.500L1141 1556.500M1141 1547.500L1133 1556.500" stroke="#3c3f41" stroke-width="1.600"/>
<rect x="1480" y="1551" width="12" height="10" fill="#afb1b3"/><path d="M1476 1551v-5a3.500 3.500 0 0 1 7 0v3" fill="none" stroke="#afb1b3" stroke-width="1.800"/>

<!-- menu icons -->
<use href="#chr" x="423" y="63"/><use href="#chr" x="423" y="131"/><use href="#chr" x="423" y="272"/><use href="#chr" x="423" y="311"/><use href="#chr" x="423" y="458"/><use href="#chr" x="423" y="492"/><use href="#chr" x="423" y="566"/>
<path d="M57 88h8l3 3h9v3H62l-5 11z" fill="#afb1b3"/><path d="M62 96h20l-5 11H57z" fill="#afb1b3"/>
<path d="M58 214.500L68 204" stroke="#afb1b3" stroke-width="4.500"/><path d="M71 194.500a7.500 7.500 0 0 0-7 10.500l4 4a7.500 7.500 0 0 0 10-8.500l-4.500 4-4.500-1-1-4.500z" fill="#afb1b3"/>
<path d="M56 231h9l2 3h11v4H68v11H56z" fill="#afb1b3"/><g fill="#3592c4"><rect x="71" y="237" width="7" height="5.500"/><rect x="63.500" y="244.500" width="6.500" height="6"/><rect x="71" y="244.500" width="7" height="6"/></g>
<rect x="57" y="342" width="20" height="20" fill="#afb1b3"/><rect x="60" y="345" width="14" height="5" fill="#3c3f41"/><rect x="61" y="356" width="9" height="6" fill="#3c3f41"/>
<g transform="translate(67,387)"><use href="#rf"/></g>
<g fill="#5d6062"><rect x="60" y="590.500" width="13" height="5"/><rect x="55.500" y="597" width="22.500" height="9" rx="1"/><rect x="61" y="603" width="11" height="8.500" fill="#5d6062"/><rect x="62.500" y="604" width="8" height="6" fill="#3c3f41"/></g>

<!-- red annotations -->
<g fill="none" stroke="#ed1c24" stroke-width="5" stroke-linejoin="round">
<rect x="50.500" y="396.500" width="197" height="45"/>
<rect x="1003.500" y="134.500" width="71" height="53"/>
<rect x="1089.500" y="868" width="401" height="140"/>
</g>
<path d="M252 440L339 411L961 180L960 175L993 178L968 203L968 194L339 421.500z" fill="#ed1c24"/>
<path d="M253 444L259 437L1076 949L1074 951.500z" fill="#ed1c24"/>
</svg>

<div class="red" style="top:1094px">如果有红色波浪线，</div>
<div class="red" style="top:1148px">点击文件<i>-</i>&gt;</div>
<div class="red" style="top:1202px">清除缓存<i>-</i>&gt;</div>
<div class="red" style="top:1255px">重新加载所以Maven项目</div>

</div>
</body></html>
